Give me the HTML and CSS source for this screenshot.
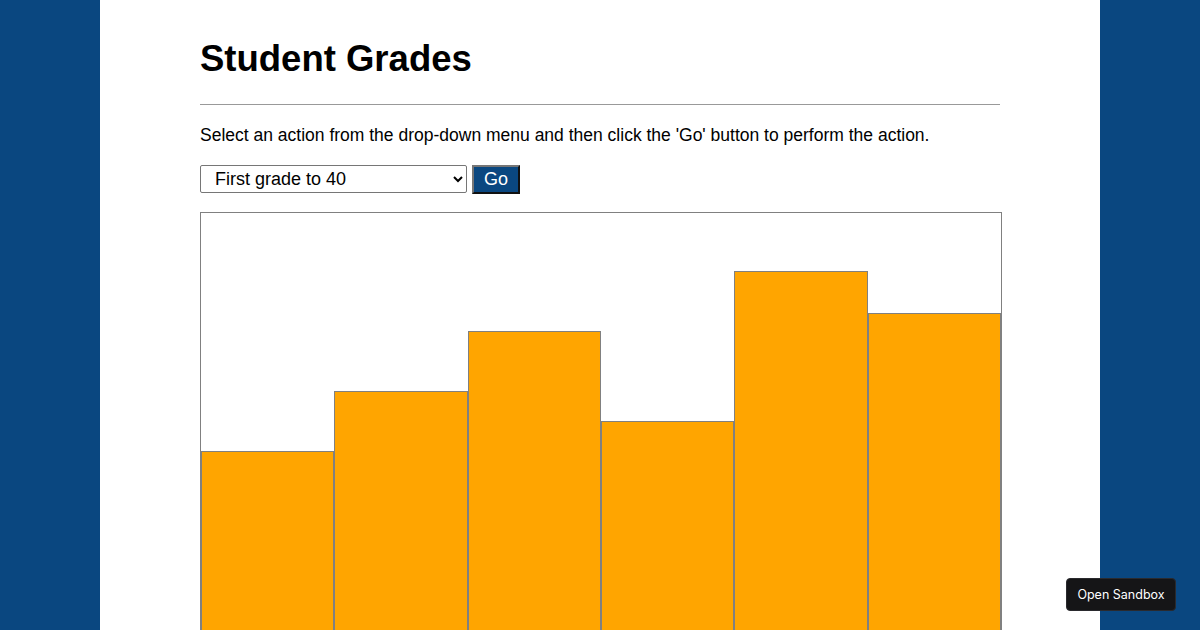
FILE: index.html
```html
<!DOCTYPE html>
<html lang="en">
<head>
<meta charset="utf-8">
<title>Student Grades</title>
<link rel="stylesheet" href="styles.css">
</head>
<body>
<main class="page">
  <h1 class="title">Student Grades</h1>
  <hr class="rule">
  <p class="intro">Select an action from the drop-down menu and then click the 'Go' button to perform the action.</p>
  <div class="controls">
    <select class="action">
      <option>First grade to 40</option>
      <option>Add 10 to all grades</option>
    </select>
    <button class="go" type="button">Go</button>
  </div>
  <div class="chart">
    <div class="bar" style="height:242px"></div>
    <div class="bar" style="height:302px"></div>
    <div class="bar" style="height:362px"></div>
    <div class="bar" style="height:272px"></div>
    <div class="bar" style="height:422px"></div>
    <div class="bar" style="height:380px"></div>
  </div>
</main>
<button class="sandbox" type="button">Open Sandbox</button>
</body>
</html>
```
FILE: styles.css
```css
html, body {
  margin: 0;
  padding: 0;
}
body {
  background: #0a4780;
  font-family: "Liberation Sans", Arial, sans-serif;
  color: #000;
}
.page {
  width: 800px;
  margin: 0 auto;
  background: #fff;
  padding: 36px 100px 40px;
  min-height: 700px;
}
.title {
  margin: 0;
  font-size: 36.5px;
  font-weight: bold;
  line-height: 46px;
}
.rule {
  margin: 22px 0 0;
  border: 0;
  border-top: 1px solid #999;
  height: 0;
}
.intro {
  margin: 19px 0 0;
  font-size: 17.5px;
  line-height: 22px;
}
.controls {
  display: flex;
  gap: 5px;
  margin-top: 19px;
  align-items: flex-start;
}
.action {
  width: 267px;
  height: 28px;
  font-family: "Liberation Sans", Arial, sans-serif;
  font-size: 18px;
  padding: 0 0 0 10px;
  border: 1px solid #767676;
  border-radius: 2px;
  background: #fff;
  color: #000;
}
.go {
  width: 48px;
  height: 29px;
  padding: 0;
  background: #0a4780;
  color: #fff;
  font-family: "Liberation Sans", Arial, sans-serif;
  font-size: 18px;
  border: 2px solid;
  border-color: #767676 #111 #111 #767676;
}
.chart {
  margin-top: 18px;
  width: 800px;
  height: 480px;
  border: 1px solid #808080;
  display: flex;
  align-items: flex-end;
}
.bar {
  flex: 1;
  box-sizing: border-box;
  background: #ffa500;
  border: 1px solid #808080;
}
.sandbox {
  position: fixed;
  right: 24px;
  bottom: 19px;
  width: 110px;
  height: 33px;
  background: #151517;
  color: #fff;
  border: 1px solid #2a2a2e;
  border-radius: 4px;
  font-family: Inter, "Liberation Sans", sans-serif;
  font-size: 12.5px;
  padding: 0;
}
```
